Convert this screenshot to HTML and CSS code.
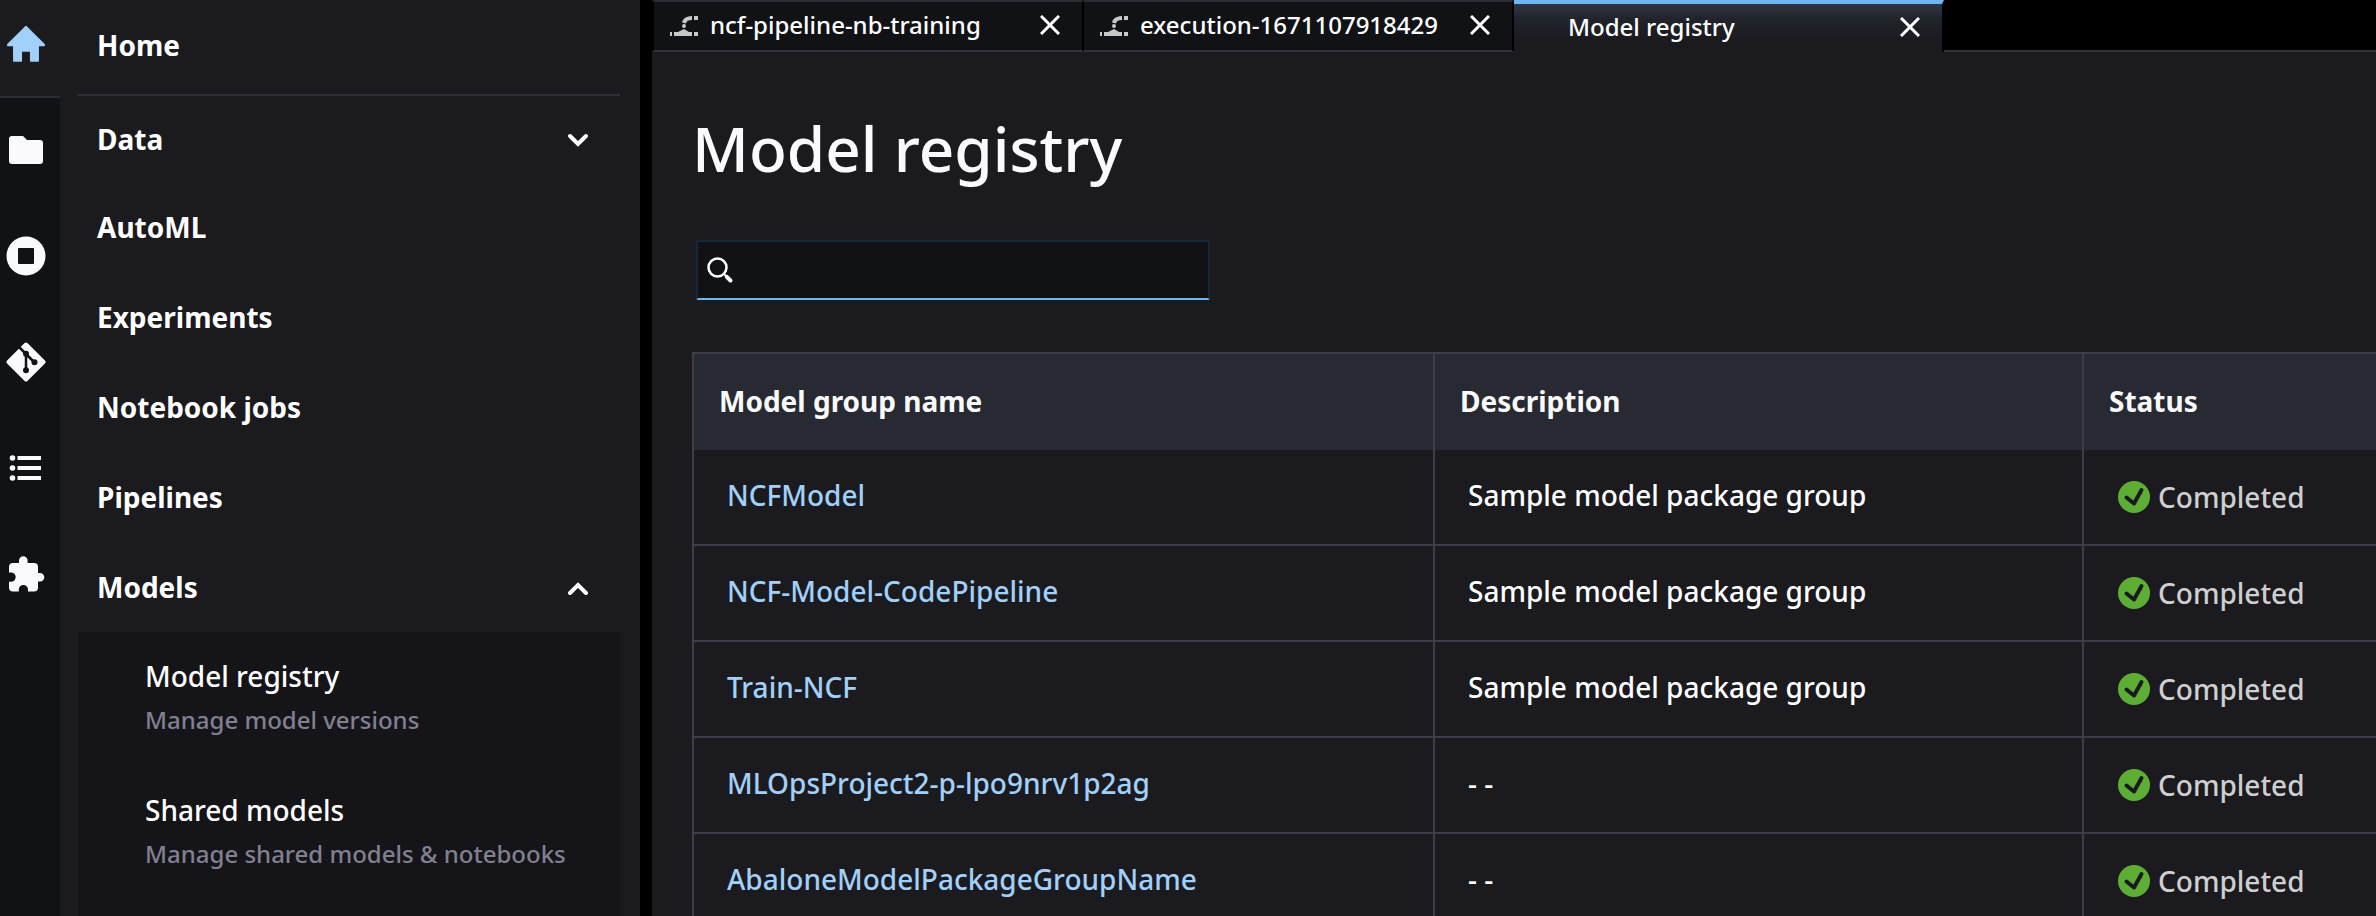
FILE: index.html
```html
<!DOCTYPE html>
<html lang="en">
<head>
<meta charset="utf-8">
<title>Model registry</title>
<link rel="stylesheet" href="styles.css">
</head>
<body>
<div class="app">
  <nav class="rail" aria-label="Panels">
    <button class="rail-button rail-button--active" aria-label="Home"><svg class="rail-icon" viewBox="0 0 40 40"><path fill="#a1d0f9" stroke="#a1d0f9" stroke-width="1.500" stroke-linejoin="round" d="M20 3.500 38.200 21.500V22.500H32.200V38H24.700V28H15.300V38H7.800V22.500H1.800V21.500Z"/></svg></button>
    <button class="rail-button" aria-label="Files"><svg class="rail-icon" viewBox="0 0 40 40"><path fill="#fafafc" d="M6 6H17L21 10H34Q37 10 37 13V31Q37 34 34 34H6Q3 34 3 31V9Q3 6 6 6Z"/></svg></button>
    <button class="rail-button" aria-label="Running"><svg class="rail-icon" viewBox="0 0 40 40"><path fill="#fafafc" fill-rule="evenodd" d="M20 .500A19.500 19.500 0 1 1 20 39.500 19.500 19.500 0 1 1 20 .500ZM13 12Q12 12 12 13V27Q12 28 13 28H27Q28 28 28 27V13Q28 12 27 12Z"/></svg></button>
    <button class="rail-button" aria-label="Git"><svg class="rail-icon" viewBox="0 0 40 40"><path fill="#fafafc" stroke="#fafafc" stroke-width="4" stroke-linejoin="round" d="M20 2.500 37.500 20 20 37.500 2.500 20Z"/><path fill="none" stroke="#111216" stroke-width="2.500" d="M12.500 4.500 20 12 28.500 20.500M20 12V28"/><circle cx="20" cy="11.700" r="3" fill="#111216"/><circle cx="28.500" cy="20.300" r="3" fill="#111216"/><circle cx="20" cy="28.300" r="3" fill="#111216"/></svg></button>
    <button class="rail-button" aria-label="Contents"><svg class="rail-icon" viewBox="0 0 40 40"><g fill="#fafafc"><circle cx="6.500" cy="10" r="2.800"/><circle cx="6.500" cy="20" r="2.800"/><circle cx="6.500" cy="30" r="2.800"/><path d="M11.500 8H35V12H11.500ZM11.500 18H35V22H11.500ZM11.500 28H35V32H11.500Z"/></g></svg></button>
    <button class="rail-button" aria-label="Extensions"><svg class="rail-icon" viewBox="0 0 40 40"><path fill="#fafafc" d="M7 9H13V6.500A4.300 4.300 0 0 1 21.600 6.500V9H28Q32 9 32 13V19H34A4.300 4.300 0 0 1 34 27.600H32V33.500Q32 37.500 28 37.500H22V35.500A4.600 4.600 0 0 0 12.800 35.500V37.500H7Q3 37.500 3 33.500V27.800H5A4.700 4.700 0 0 0 5 18.400H3V13Q3 9 7 9Z"/></svg></button>
  </nav>
  <aside class="sidebar">
    <a class="menu-item menu-item--home" href="#">Home</a>
    <button class="menu-item menu-item--data">Data<svg class="chevron" viewBox="0 0 22 16"><path d="M3 5 11 13 19 5"/></svg></button>
    <a class="menu-item" href="#">AutoML</a>
    <a class="menu-item" href="#">Experiments</a>
    <a class="menu-item" href="#">Notebook jobs</a>
    <a class="menu-item" href="#">Pipelines</a>
    <button class="menu-item">Models<svg class="chevron" viewBox="0 0 22 16"><path d="M3 14 11 6 19 14"/></svg></button>
    <div class="submenu">
      <a class="submenu-item" href="#"><span class="submenu-title">Model registry</span><span class="submenu-note">Manage model versions</span></a>
      <a class="submenu-item" href="#"><span class="submenu-title">Shared models</span><span class="submenu-note">Manage shared models &amp; notebooks</span></a>
    </div>
  </aside>
  <main class="workspace">
    <div class="tabs">
      <div class="tab">
        <svg class="tab-icon" viewBox="0 0 30 28"><path fill="#c8c8c8" d="M0 21H2V25H0ZM4 21H8L14 18 19 21H22V25H4ZM24 21H28V25H24ZM24 5H28V9H24Z"/><path fill="none" stroke="#c8c8c8" stroke-width="4" d="M22 7Q15 7 14 12"/><circle cx="14" cy="15" r="2" fill="#c8c8c8"/></svg>
        <span class="tab-label">ncf-pipeline-nb-training</span>
        <button class="tab-close" aria-label="Close tab"><svg class="close-icon" viewBox="0 0 20 20"><path d="M1 1 19 19M19 1 1 19"/></svg></button>
      </div>
      <div class="tab">
        <svg class="tab-icon" viewBox="0 0 30 28"><path fill="#c8c8c8" d="M0 21H2V25H0ZM4 21H8L14 18 19 21H22V25H4ZM24 21H28V25H24ZM24 5H28V9H24Z"/><path fill="none" stroke="#c8c8c8" stroke-width="4" d="M22 7Q15 7 14 12"/><circle cx="14" cy="15" r="2" fill="#c8c8c8"/></svg>
        <span class="tab-label">execution-1671107918429</span>
        <button class="tab-close" aria-label="Close tab"><svg class="close-icon" viewBox="0 0 20 20"><path d="M1 1 19 19M19 1 1 19"/></svg></button>
      </div>
      <div class="tab tab--active">
        <span class="tab-label">Model registry</span>
        <button class="tab-close" aria-label="Close tab"><svg class="close-icon" viewBox="0 0 20 20"><path d="M1 1 19 19M19 1 1 19"/></svg></button>
      </div>
      <div class="tabs-rest"></div>
    </div>
    <section class="content">
      <h1 class="title">Model registry</h1>
      <label class="search">
        <svg class="search-icon" viewBox="0 0 28 28"><circle cx="11.500" cy="11.500" r="9" fill="none" stroke="#fff" stroke-width="2.500"/><path fill="none" stroke="#fff" stroke-width="2" d="M17.500 17.500 20.500 20.500"/><path fill="none" stroke="#fff" stroke-width="4" stroke-linecap="round" d="M20.800 20.800 24.500 24.500"/></svg>
        <input class="search-input" type="text" aria-label="Search model groups">
      </label>
      <table class="models">
        <colgroup><col class="col-name"><col class="col-description"><col></colgroup>
        <thead><tr><th>Model group name</th><th>Description</th><th>Status</th></tr></thead>
        <tbody>
          <tr><td><a class="model-link" href="#">NCFModel</a></td><td>Sample model package group</td><td><span class="status"><svg class="status-icon" viewBox="0 0 32 32"><circle cx="16" cy="16" r="16" fill="#5eae36"/><path d="M8.500 16.500 16 22.500 23.500 9"/></svg>Completed</span></td></tr>
          <tr><td><a class="model-link" href="#">NCF-Model-CodePipeline</a></td><td>Sample model package group</td><td><span class="status"><svg class="status-icon" viewBox="0 0 32 32"><circle cx="16" cy="16" r="16" fill="#5eae36"/><path d="M8.500 16.500 16 22.500 23.500 9"/></svg>Completed</span></td></tr>
          <tr><td><a class="model-link" href="#">Train-NCF</a></td><td>Sample model package group</td><td><span class="status"><svg class="status-icon" viewBox="0 0 32 32"><circle cx="16" cy="16" r="16" fill="#5eae36"/><path d="M8.500 16.500 16 22.500 23.500 9"/></svg>Completed</span></td></tr>
          <tr><td><a class="model-link" href="#">MLOpsProject2-p-lpo9nrv1p2ag</a></td><td>- -</td><td><span class="status"><svg class="status-icon" viewBox="0 0 32 32"><circle cx="16" cy="16" r="16" fill="#5eae36"/><path d="M8.500 16.500 16 22.500 23.500 9"/></svg>Completed</span></td></tr>
          <tr><td><a class="model-link" href="#">AbaloneModelPackageGroupName</a></td><td>- -</td><td><span class="status"><svg class="status-icon" viewBox="0 0 32 32"><circle cx="16" cy="16" r="16" fill="#5eae36"/><path d="M8.500 16.500 16 22.500 23.500 9"/></svg>Completed</span></td></tr>
        </tbody>
      </table>
    </section>
  </main>
</div>
</body>
</html>
```
FILE: styles.css
```css
* { box-sizing: border-box; }
body {
  margin: 0;
  background: #000;
  color: #fff;
  font-family: "Noto Sans", "Open Sans", sans-serif;
  font-size: 28px;
  line-height: 40px;
}
a { color: inherit; text-decoration: none; }
button, input { margin: 0; padding: 0; border: 0; background: none; color: inherit; font: inherit; }
svg { display: block; flex: none; }
.app { display: flex; height: 100vh; overflow: hidden; }

.rail { flex: none; width: 60px; background: #111216; }
.rail-button { display: flex; align-items: center; width: 60px; height: 106px; padding: 0 0 2px 6px; }
.rail-button--active { height: 98px; padding-bottom: 10px; background: #1b1a1f; border-bottom: 2px solid #2b2a30; }
.rail-icon { width: 40px; height: 40px; }

.sidebar { flex: none; width: 580px; padding: 0 20px 0 18px; background: #1b1a1f; }
.menu-item {
  display: flex;
  align-items: center;
  justify-content: space-between;
  width: 100%;
  height: 90px;
  padding: 0 31px 0 19px;
  font-weight: 700;
}
.menu-item--home { height: 96px; padding-bottom: 4px; border-bottom: 2px solid #302f36; }
.menu-item--data { height: 86px; }
.chevron { width: 22px; height: 16px; fill: none; stroke: #fff; stroke-width: 4; stroke-linecap: round; }
.submenu { height: 100%; padding: 20px 20px 0 67px; background: #151418; }
.submenu-item { display: block; height: 134px; padding-top: 4px; font-weight: 500; white-space: nowrap; }
.submenu-title, .submenu-note { display: block; }
.submenu-note { padding-top: 4px; color: #818090; font-size: 24px; }

.workspace { display: flex; flex-direction: column; flex: 1; min-width: 0; margin-left: 12px; background: #1b1a1f; }
.tabs { display: flex; flex: none; height: 52px; font-size: 24px; font-weight: 500; }
.tab {
  display: flex;
  align-items: center;
  width: 430px;
  padding: 0 22px 2px 16px;
  background: #111216;
  border-top: 2px solid #2b2a30;
  border-right: 2px solid #000;
  border-bottom: 2px solid #33323b;
  white-space: nowrap;
}
.tab:first-child { width: 432px; border-left: 2px solid #000; }
.tab--active {
  padding: 0 22px 2px 54px;
  border-top: 4px solid #6bb7f2;
  border-bottom: 0;
  background: linear-gradient(#2f3744, #21242c 30%, #1b1a1f 75%);
}
.tab-icon { width: 30px; height: 28px; margin-right: 10px; }
.tab-label { flex: 1; }
.close-icon { width: 20px; height: 20px; fill: none; stroke: #fff; stroke-width: 3; }
.tabs-rest { flex: 1; background: #000; border-bottom: 2px solid #33323b; }

.content { flex: 1; min-height: 0; padding: 54px 0 0 40px; overflow: hidden; }
.title { margin: 0; color: #fafafc; font-size: 62px; font-weight: 500; line-height: 84px; }
.search {
  display: flex;
  align-items: center;
  width: 514px;
  height: 60px;
  margin: 50px 0 52px 4px;
  padding-left: 8px;
  background: #111216;
  border: 2px solid #17263a;
  border-bottom-color: #6bb7f2;
  border-radius: 2px;
}
.search-icon { width: 28px; height: 28px; margin-right: 8px; }
.search-input { flex: 1; min-width: 0; outline: 0; }

.models { width: 100%; border-collapse: separate; border-spacing: 0; table-layout: fixed; border-top: 2px solid #3c3d49; border-left: 2px solid #3c3d49; white-space: nowrap; }
.col-name { width: 741px; }
.col-description { width: 649px; }
.models th { height: 96px; padding: 0 0 2px 25px; background: #282a33; border-right: 2px solid #3c3d49; color: #fafafc; font-weight: 700; text-align: left; }
.models td { height: 96px; padding: 0 0 4px 33px; border-right: 2px solid #3c3d49; border-bottom: 2px solid #3c3d49; font-weight: 500; }
.models th:last-child, .models td:last-child { border-right: 0; }
.models td:last-child { padding-bottom: 0; padding-left: 34px; }
.model-link { color: #a1d0f9; }
.status { display: flex; align-items: center; gap: 8px; color: #cfcfcf; }
.status-icon { width: 32px; height: 32px; }
.status-icon path { fill: none; stroke: #1b1a1f; stroke-width: 4; stroke-linecap: round; stroke-linejoin: round; }
```
